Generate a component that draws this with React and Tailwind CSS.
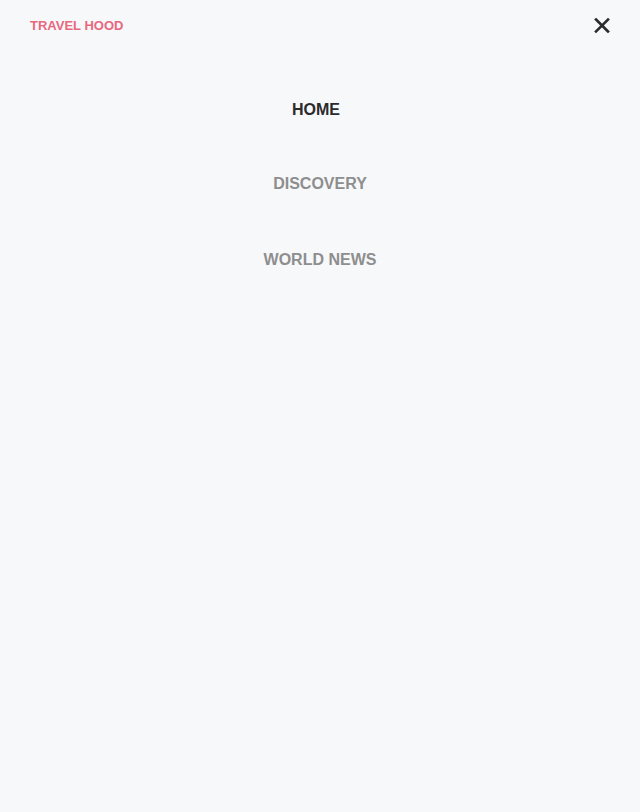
import React from 'react';

const links = [
  { label: 'HOME', active: true, gap: '' },
  { label: 'DISCOVERY', gap: 'mt-[54px]' },
  { label: 'WORLD NEWS', gap: 'mt-[56px]' },
];

const App = () => {
  return (
    <div className="min-h-[812px] w-full bg-[#f7f8fa] font-['Liberation_Sans',Arial,sans-serif]">
      {/* Header */}
      <div className="flex h-[52px] items-center justify-between pl-[30px] pr-[29px]">
        <span className="text-[13px] font-bold text-[#e8687f]">TRAVEL HOOD</span>
        <button className="flex h-[20px] w-[20px] items-center justify-center text-[#2b2b2b]">
          <svg width="18" height="18" viewBox="0 0 18 18" fill="none" stroke="currentColor" strokeWidth="2.6" strokeLinecap="square">
            <path d="M4 2.5 L16 14.5 M16 2.5 L4 14.5" />
          </svg>
        </button>
      </div>

      {/* Nav */}
      <nav className="mt-[48px] flex flex-col items-center">
        {links.map((link) => (
          <a
            key={link.label}
            href="#"
            className={`text-[16px] font-bold leading-[20px] ${link.gap} ${
              link.active ? 'mr-2 text-[#2b2b2b]' : 'text-[#8e8e8e]'
            }`}
          >
            {link.label}
          </a>
        ))}
      </nav>
    </div>
  );
};

export default App;
